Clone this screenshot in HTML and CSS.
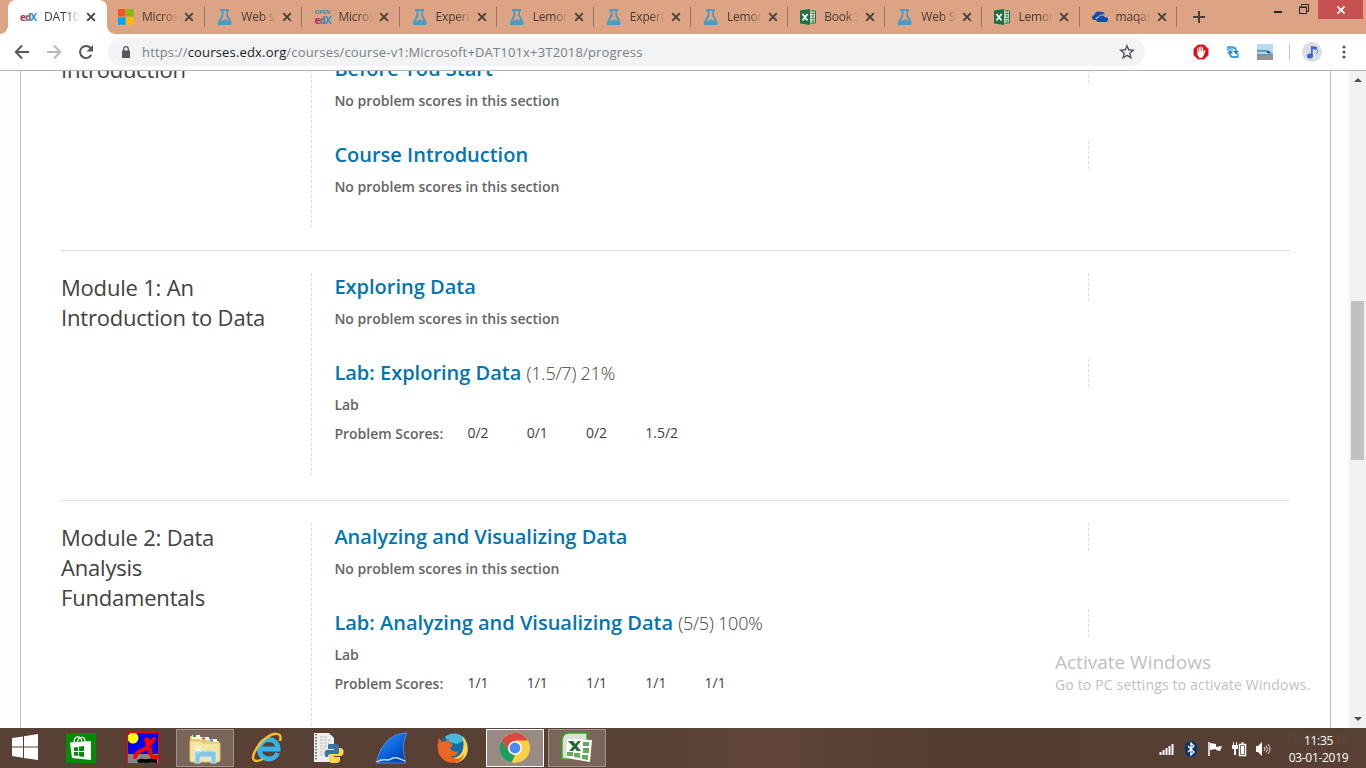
FILE: index.html
```
<!DOCTYPE html>
<html lang="en">
<head>
<meta charset="utf-8">
<title>Progress | DAT101x</title>
<link rel="stylesheet" href="styles.css">
</head>
<body>
<svg width="0" height="0" class="defs">
  <defs>
    <symbol id="x" viewBox="0 0 10 10"><path d="M1.2 1.2l7.6 7.6M8.800 1.200L1.200 8.800" stroke="#47413e" stroke-width="1.9" fill="none"/></symbol>
    <symbol id="flask" viewBox="0 0 16 16"><path fill="#4b9cc2" fill-rule="evenodd" d="M3 0h9v2h-1v4l3.500 7c.8 2-.2 3-1.500 3H2C.6 16 .2 14.500 1 13l3.500-7V2H3zM6.500 2v5L3.800 11.600l2 .2 1.500-1.500 3 1.200 1-.8L9.300 7V2z"/></symbol>
    <symbol id="xls" viewBox="0 0 16 16"><path fill="#1c7145" d="M0 1.500L10 0v16L0 14.500z"/><path d="M10.500 2H15.500v12h-5" fill="#fff" stroke="#1c7145"/><path d="M10.500 4.500h5M10.500 7h5M10.500 9.500h5M10.500 12h5M13 2v12" stroke="#1c7145" stroke-width=".8"/><path d="M2.500 5l5 6.500M7.500 5l-5 6.500" stroke="#fff" stroke-width="1.700"/></symbol>
  </defs>
</svg>
<header class="tabstrip">
  <div class="tab active">
    <span class="fav edx"><i>e</i><b>d</b><em>X</em></span><span class="label">DAT10</span><svg class="close"><use href="#x"/></svg>
  </div>
  <div class="tab second"><svg class="fav" viewBox="0 0 16 16"><path fill="#f35325" d="M0 0h7.500v7.500H0z"/><path fill="#81bc06" d="M8.200 0h7.500v7.500H8.200z"/><path fill="#05a6f0" d="M0 8.200h7.500v7.500H0z"/><path fill="#ffba08" d="M8.200 8.200h7.500v7.500H8.200z"/></svg><span class="label">Micros</span><svg class="close"><use href="#x"/></svg></div>
  <div class="tab"><svg class="fav"><use href="#flask"/></svg><span class="label">Web s</span><svg class="close"><use href="#x"/></svg></div>
  <div class="tab"><span class="fav openedx"><small>OPEN</small><span class="edx"><i>e</i><b>d</b><em>X</em></span></span><span class="label">Micros</span><svg class="close"><use href="#x"/></svg></div>
  <div class="tab"><svg class="fav"><use href="#flask"/></svg><span class="label">Experi</span><svg class="close"><use href="#x"/></svg></div>
  <div class="tab"><svg class="fav"><use href="#flask"/></svg><span class="label">Lemon</span><svg class="close"><use href="#x"/></svg></div>
  <div class="tab"><svg class="fav"><use href="#flask"/></svg><span class="label">Experi</span><svg class="close"><use href="#x"/></svg></div>
  <div class="tab"><svg class="fav"><use href="#flask"/></svg><span class="label">Lemon</span><svg class="close"><use href="#x"/></svg></div>
  <div class="tab"><svg class="fav"><use href="#xls"/></svg><span class="label">Book 3</span><svg class="close"><use href="#x"/></svg></div>
  <div class="tab"><svg class="fav"><use href="#flask"/></svg><span class="label">Web S</span><svg class="close"><use href="#x"/></svg></div>
  <div class="tab"><svg class="fav"><use href="#xls"/></svg><span class="label">Lemon</span><svg class="close"><use href="#x"/></svg></div>
  <div class="tab"><svg class="fav" viewBox="0 0 16 16"><path fill="#0b4db5" d="M2 11C-1 10-.5 6 2.500 6 3 3 5.500 1.500 8.500 3 11 2 12.500 4 12.500 5.500 9 4.500 7 6 6.500 7.500 4 7.500 3 9.500 4 11z"/><path fill="#0b4db5" d="M6 13c-2.500-.5-2-4 1-4.500C7.500 6 11.500 5.500 12.800 8.300c2.500-.3 3.700 1 3.200 2.700-.2 1.300-1 2-2 2z"/></svg><span class="label">maqas</span><svg class="close"><use href="#x"/></svg></div>
  <svg class="plus" viewBox="0 0 12 12"><path d="M6 0v12M0 6h12" stroke="#47413e" stroke-width="2"/></svg>
  <div class="window-buttons">
    <svg class="min" viewBox="0 0 8 2"><path fill="#222" d="M0 0h8v2H0z"/></svg>
    <svg class="max" viewBox="0 0 10 10"><path d="M2.500 2V.5h7v7H8M.5 3.500h7v6h-7zM0 3h8" fill="none" stroke="#222"/></svg>
    <span class="quit"><svg viewBox="0 0 8 8"><path d="M.5.5l7 7M7.500.5l-7 7" stroke="#fff" stroke-width="1.700"/></svg></span>
  </div>
</header>
<nav class="toolbar">
  <div class="nav">
    <svg viewBox="0 0 16 16"><path d="M15 8H2M8 1.500L1.800 8 8 14.500" fill="none" stroke="#55585c" stroke-width="2"/></svg>
    <svg viewBox="0 0 16 16"><path d="M1 8h13M8 1.500L14.200 8 8 14.500" fill="none" stroke="#b8babd" stroke-width="2"/></svg>
    <svg viewBox="0 0 16 16"><path d="M13.300 11A6 6 0 1 1 12.600 4" fill="none" stroke="#55585c" stroke-width="2"/><path d="M15 1v6.500H8.500z" fill="#55585c"/></svg>
  </div>
  <div class="omnibox">
    <svg class="lock" viewBox="0 0 8 12"><path d="M0 4.500h8V12H0z" fill="#55585c"/><path d="M1.700 5V3a2.300 2.300 0 0 1 4.600 0v2" fill="none" stroke="#55585c" stroke-width="1.300"/></svg>
    <span class="url">https://<b>courses.edx.org</b>/courses/course-v1:Microsoft+DAT101x+3T2018/progress</span>
    <svg class="star" viewBox="0 0 16 16"><path d="M8 1.800l1.700 4 4.600.4-3.500 3 1.100 4.500L8 11.400l-3.900 2.300 1.100-4.500-3.500-3 4.600-.4z" fill="none" stroke="#55585c" stroke-width="1.400"/></svg>
  </div>
  <div class="extensions">
    <svg viewBox="0 0 16 16"><path fill="#d8d8d8" d="M4.500 0h7L16 4.500v7L11.500 16h-7L0 11.500v-7z"/><path fill="#e10e0e" d="M5 .7h6L15.300 5v6L11 15.300H5L.7 11V5z"/><path fill="#fff" d="M4 8V4.500h1V8h.6V3h1.200v4h.5V2.500h1.200V7H9V3.300h1.200V8l1.300-2 1 .5L11 11l-2 3H6.500L4.500 11z"/></svg>
    <svg viewBox="0 0 16 16"><path d="M2 2h6v6H5V5L2 5z" fill="#8bd0f2"/><path d="M3 3.500h5q3 0 3 4M13 13H8q-3 0-3-4" fill="none" stroke="#3d9fd6" stroke-width="2"/><path d="M8 7h6l-3 3.500zM2 9.500h6L5 6z" fill="#2b83ba"/><path d="M2 2v5l3-1zM14 14V9l-3 1z" fill="#55b5ea"/></svg>
    <svg viewBox="0 0 16 16"><path fill="#b7dcf1" d="M0 0h16v16H0z"/><path fill="#7fb6d3" d="M0 5.500l11 .5 4 3v2H0z"/><path fill="#9a9290" d="M0 11.500h16V16H0z"/><path d="M0 7h10" stroke="#3d86ae"/><path d="M1 9h9" stroke="#eaf5fb"/><path d="M0 11h16" stroke="#4b7d99"/><path fill="#295874" d="M10 7h2l2 2h-4z"/></svg>
    <i class="rule"></i>
    <span class="avatar"><svg viewBox="0 0 16 16"><path d="M7 12V2l6 1v3L8.700 5v7" fill="#3c62da"/><ellipse cx="6" cy="12" rx="3" ry="2.500" fill="#3c62da"/><path d="M12 4l2 4-2 2" stroke="#6685df" fill="none"/></svg></span>
    <svg class="dots" viewBox="0 0 4 14"><g fill="#55585c"><circle cx="2" cy="2" r="1.600"/><circle cx="2" cy="7" r="1.600"/><circle cx="2" cy="12" r="1.600"/></g></svg>
  </div>
</nav>
<main class="viewport">
  <div class="page">
    <section class="chapter first">
      <h2>Introduction</h2>
      <div class="sections">
        <div class="section"><h3><a>Before You Start</a></h3><p>No problem scores in this section</p></div>
        <div class="section"><h3><a>Course Introduction</a></h3><p>No problem scores in this section</p></div>
      </div>
    </section>
    <section class="chapter">
      <h2>Module 1: An Introduction to Data</h2>
      <div class="sections">
        <div class="section"><h3><a>Exploring Data</a></h3><p>No problem scores in this section</p></div>
        <div class="section graded"><h3><a>Lab: Exploring Data</a> <span class="total">(1.5/7) 21%</span></h3><p>Lab</p>
          <dl><dt>Problem Scores:</dt><dd>0/2</dd><dd>0/1</dd><dd>0/2</dd><dd>1.5/2</dd></dl></div>
      </div>
    </section>
    <section class="chapter">
      <h2>Module 2: Data Analysis Fundamentals</h2>
      <div class="sections">
        <div class="section"><h3><a>Analyzing and Visualizing Data</a></h3><p>No problem scores in this section</p></div>
        <div class="section graded"><h3><a>Lab: Analyzing and Visualizing Data</a> <span class="total">(5/5) 100%</span></h3><p>Lab</p>
          <dl><dt>Problem Scores:</dt><dd>1/1</dd><dd>1/1</dd><dd>1/1</dd><dd>1/1</dd><dd>1/1</dd></dl></div>
      </div>
    </section>
  </div>
  <div class="scrollbar">
    <svg viewBox="0 0 8 4"><path d="M0 4l4-4 4 4z" fill="#505050"/></svg>
    <i class="thumb"></i>
    <svg viewBox="0 0 8 4"><path d="M0 0l4 4 4-4z" fill="#505050"/></svg>
  </div>
  <aside class="watermark"><strong>Activate Windows</strong><span>Go to PC settings to activate Windows.</span></aside>
</main>
<footer class="taskbar">
  <div class="start"><svg width="26" height="26" viewBox="0 0 26 26"><path fill="#fff" d="M0 4l11-1.600V12.500H0zM12 2.200L26 0v12.500H12zM0 13.500h11v10.200L0 22zM12 13.500h14V26l-14-2.100z"/></svg></div>
  <div class="slot"><svg viewBox="0 0 30 30"><path fill="#048a04" d="M0 0h30v30H0z"/><path fill="#fff" d="M4 9.500l21-1.500v19L6 25z"/><path d="M8 10c0-8 7-8 8-1M11 10c2-8 8-7 8-1" fill="none" stroke="#fff" stroke-width="1.200"/><path fill="#048a04" d="M8 14.500l4-.5v4H8zM13 13.800l5-.8v5h-5zM8 19h4v4l-4-.4zM13 19h5v5l-5-.8z"/></svg></div>
  <div class="slot"><svg class="large" viewBox="0 0 32 32"><path fill="#0000f2" d="M0 0h32v22H0z"/><path fill="#858585" d="M0 22h32v10H0z"/><circle cx="6" cy="6" r="5.500" fill="#ff0"/><path d="M11 30c4-3 6 0 10-1s6 0 9 0" stroke="#000" stroke-width="4" fill="none"/><path d="M8 25q2-6 8-7q5-3 7-6l4-5M20 8q0 5 3 9q0 6 3 8h4" stroke="#f00" stroke-width="4" fill="none" stroke-linecap="round"/><circle cx="20" cy="8" r="2.700" fill="#f00"/><path d="M.5.5h31v31H.5z" stroke="#f00" fill="none"/></svg></div>
  <div class="slot"><span class="window"><svg class="large" viewBox="0 0 32 32"><path fill="#e5cd79" d="M1 4h10l2 3h6l1 2h10v21H1z"/><path fill="#fff9df" d="M3 3h8v4H3zM11 5h9v3h-9zM20 7h8v3h-8z"/><path d="M4 4h3" stroke="#14a522" stroke-width="2"/><path d="M13 6.500h3" stroke="#d5472b" stroke-width="2"/><path d="M21 8.500h3" stroke="#2389d2" stroke-width="2"/><path d="M1 9h11l2 2h17v17c0 1-1 2-2 2H3c-1 0-2-1-2-2z" fill="#f5e5a2" stroke="#dfc46c"/><path d="M6 31V21c0-2 1-2 2-2h17c2 0 2 1 2 2v10h-5v-6H11v6z" fill="#83c6e5" stroke="#c5eafa"/><path d="M9 13v9M5 17h8M6 14l6 6M12 14l-6 6" stroke="#fff" stroke-width=".7"/></svg></span></div>
  <div class="slot"><svg viewBox="0 0 30 30"><path d="M25.500 20c-3 9-18 8-18-4s18-13 18.500 0H9" fill="none" stroke="#36b3e9" stroke-width="5"/><path d="M5 28C-4 28 4 13 14 5c7-5 17-7 14 3M5 28c2 0 4-1 6-2" fill="none" stroke="#f4bf26" stroke-width="2.500"/></svg></div>
  <div class="slot"><svg viewBox="0 0 30 30"><path fill="#eee" d="M0 0h15l5 5v24H0z"/><path d="M2 1v27" stroke="#555" stroke-width="1.500" stroke-dasharray="1.500 1.500"/><path d="M6 4h8M6 7h11M6 10h9M6 13h11M6 16h6M6 19h5M6 22h4" stroke="#bbb" stroke-dasharray="3 1"/><path fill="#3675a9" d="M15 11h6c3 0 4 1 4 3v4c0 2-1 3-3 3h-5c-2 0-3 1-3 3h-2c-2-1-2-7 1-7h7v-1h-6v-2c0-2 0-3 1-3z"/><path fill="#ffd54b" d="M25 15h2c4 1 3 8 0 8h-7v1h6v3c0 2-1 3-4 3h-4c-2 0-3-1-3-3v-4c0-1 1-2 3-2h5c2 0 2-1 2-3z"/></svg></div>
  <div class="slot"><svg viewBox="0 0 30 30"><defs><linearGradient id="fin" x2=".8" y2="1"><stop stop-color="#4090f5"/><stop offset=".6" stop-color="#0962dc"/><stop offset="1" stop-color="#003eaf"/></linearGradient></defs><path fill="url(#fin)" stroke="#5d9ce8" stroke-width=".7" d="M0 30C4 14 13 0 31 0c-5 10-4 20-1 30z"/><path d="M1 29c7-5 9 0 14-3s9 0 14 2" stroke="#c5dcfa" stroke-width="1.500" fill="none"/></svg></div>
  <div class="slot"><svg viewBox="0 0 30 30"><circle cx="16" cy="14.500" r="14" fill="#176aa9"/><path fill="#46b9dc" d="M7 4C12-1 23-1 27 7l-8 4-8-2z"/><path fill="#fbd64b" d="M24 3c9 8 8 24-6 27l-3-5c9-1 13-10 9-22z"/><path fill="#e96724" d="M1 5l3 4 4-1 3-3v5c4 0 5 2 1 5 2 4 5 4 8 3-1 5-5 6-8 5 6 5 13 2 14-3 0 9-12 13-20 7S-1 13 1 5z"/></svg></div>
  <div class="slot"><span class="window current"><svg viewBox="0 0 30 30"><circle cx="15" cy="15" r="15" fill="#fbce46"/><path fill="#dc493e" d="M2 7.500C8-2 22-3 28 7.500H15L8.500 19z"/><path fill="#1a9f5c" d="M2 7.500L9 19l6 3-3.500 7.600C1 27-3 16 2 7.500z"/><circle cx="15" cy="15" r="7" fill="#fff"/><circle cx="15" cy="15" r="5.400" fill="#4a89f3"/></svg></span></div>
  <div class="slot"><span class="window"><svg viewBox="0 0 30 30"><path fill="#d8e2d5" stroke="#30ac21" stroke-width="1.500" d="M0 26V8c0-5 3-8 7-8h18v8H7v18z"/><path fill="#fff" d="M5 6l25 1-2 22-24-4z"/><path fill="#65a95b" d="M21 9h6v4h-6zM21 15h6v5h-6zM20 22h6v5l-6-1zM12 20h6v5l-6-1zM5 19h6v4H5z"/><path d="M6 8h5l8 10h-4zM16 8h3l-8 10H7z" fill="#246c30"/></svg></span></div>
  <div class="tray">
    <svg viewBox="0 0 16 16"><path d="M1.500 11v3M4.500 9v5M7.500 7v7M10.500 5v9M13.500 3v11" stroke="#fff" stroke-width="2"/></svg>
    <svg viewBox="0 0 16 16"><rect x="2" width="12" height="16" rx="6" fill="#07366f"/><path d="M5 5l6 6-3 3V2l3 3-6 6" fill="none" stroke="#fff" stroke-width="1.300"/></svg>
    <svg viewBox="0 0 16 16"><path d="M2 1v14" stroke="#fff" stroke-width="1.500"/><path d="M3 2l6 1v3l6-1-2 5-4-1V8L3 9z" fill="#fff"/></svg>
    <svg viewBox="0 0 16 16"><path d="M8.500 3.500h6v11h-6zM10.500 2h2" fill="none" stroke="#fff" stroke-width="1.500"/><path d="M10 5h3v8h-3z" fill="#fff"/><path d="M1 4h6v4H5v6H3V8H1zM2 1h1v3H2zM5 1h1v3H5z" fill="#fff"/></svg>
    <svg viewBox="0 0 16 16"><path d="M1 5h2l4-4v14l-4-4H1z" fill="#fff"/><path d="M9 6q2 2 0 4M11 4.500q3 3.500 0 7M13 3q4 5 0 10" fill="none" stroke="#ddd"/></svg>
  </div>
  <div class="clock"><span>11:35</span><span>03-01-2019</span></div>
</footer>
</body>
</html>
```
FILE: styles.css
```
* { box-sizing: border-box; }
body { margin: 0; width: 1366px; height: 768px; overflow: hidden; display: flex; flex-direction: column; background: #fff; font-family: "Open Sans", "Noto Sans", sans-serif; }
.defs { position: absolute; }
svg { display: block; flex: none; }
h2, h3, p, dl, dd { margin: 0; }

/* Tab strip */
.tabstrip { display: flex; height: 34px; flex: none; background: #dca384; padding-left: 8px; }
.tab { width: 97.15px; flex: none; display: flex; align-items: center; padding: 0 0 0 12px; position: relative; }
.tab::after { content: ""; position: absolute; right: 0; top: 7px; width: 1px; height: 20px; background: #967469; }
.second { width: 98.300px; padding-left: 11px; }
.second .label { width: 36px; }
.active { width: 99px; background: #fff; border-radius: 8px 8px 0 0; padding-left: 12px; }
.active::after { display: none; }
.active::before { content: ""; position: absolute; left: -8px; bottom: 0; width: 115px; height: 8px; background: radial-gradient(circle at 0 0, transparent 7.500px, #fff 8px) left / 8px 8px no-repeat, radial-gradient(circle at 100% 0, transparent 7.500px, #fff 8px) right / 8px 8px no-repeat; }
.fav { width: 16px; height: 16px; flex: none; }
.label { width: 35px; margin-left: 8px; font-size: 12px; line-height: 20px; letter-spacing: -.2px; color: #493c36; overflow: hidden; white-space: nowrap; mask-image: linear-gradient(90deg, #000 60%, transparent 100%); }
.active .label { margin-left: 8px; width: 36px; }
.close { width: 10px; height: 10px; margin-left: 6px; }
.edx { display: flex; align-items: center; font: bold 10px/16px "Open Sans", sans-serif; letter-spacing: -1px; }
.edx i { color: #b52a67; font-style: normal; }
.edx b { color: #777; }
.edx em { color: #1695e0; font-style: normal; }
.openedx { display: flex; flex-direction: column; }
.openedx small { font: bold 6px/6px "Open Sans", sans-serif; color: #3d8fac; letter-spacing: -.3px; }
.openedx .edx { line-height: 10px; }
.plus { width: 12px; height: 12px; margin: 11px 0 0 16px; }
.window-buttons { display: flex; margin-left: auto; padding-right: 3px; align-items: flex-start; }
.min { width: 8px; height: 2px; margin-top: 11px; }
.max { width: 10px; height: 10px; margin: 4px 9px 0 17px; }
.quit { width: 45px; height: 19px; background: #c75050; display: grid; place-items: center; }
.quit svg { width: 8px; height: 8px; }

/* Address bar */
.toolbar { display: flex; align-items: center; height: 37px; flex: none; border-bottom: 1px solid #b3b3b3; padding-left: 14px; }
.nav { display: flex; gap: 16px; width: 94px; }
.nav svg { width: 16px; height: 16px; }
.omnibox { width: 1037px; height: 28px; border-radius: 14px; background: #f1f3f4; display: flex; align-items: center; padding: 0 10px 0 14px; }
.lock { width: 8px; height: 12px; }
.url { margin-left: 12px; font-size: 13px; letter-spacing: .17px; color: #7b7f84; white-space: nowrap; }
.url b { font-weight: 400; color: #202124; }
.star { width: 16px; height: 16px; margin-left: auto; }
.extensions { display: flex; align-items: center; padding-left: 48px; gap: 16px; }
.extensions > svg { width: 16px; height: 16px; }
.rule { width: 1px; height: 16px; background: #c6c8ca; }
.avatar { width: 20px; height: 20px; margin-left: -6px; border-radius: 50%; background: #dcdddf; display: grid; place-items: center; outline: 0; }
.avatar svg { width: 16px; height: 16px; }
.rule + .avatar { margin-left: -4px; }
.extensions .dots { width: 4px; height: 14px; margin-left: 4px; }

/* Course progress */
.viewport { display: flex; height: 657px; flex: none; overflow: hidden; background: #fdfdfd; position: relative; }
.page { width: 1311px; height: 657px; margin-left: 20px; overflow: hidden; border: solid #c2c2c2; border-width: 0 1px; padding: 0 40px; background: #fff; }
.chapter { display: flex; border-top: 1px solid #ddd; padding: 22px 0; }
.first { margin-top: -39px; }
.chapter h2 { width: 250px; margin-top: -1px; padding-right: 40px; font-size: 22px; line-height: 30px; letter-spacing: -.2px; font-weight: 400; color: #414141; }
.sections { flex: 1; padding-left: 23.400px; background: repeating-linear-gradient(#ddd 0 3px, transparent 3px 5px) left / 1px 100% no-repeat; }
.section { height: 86px; }
.first .section:last-child { height: 87px; }
.section.graded { height: 119px; }
.section h3 { height: 28px; width: 754.600px; line-height: 28px; font-size: 20px; font-weight: 600; color: #0075b4; background: repeating-linear-gradient(#ddd 0 3px, transparent 3px 5px) right / 1px 100% no-repeat; }
.section .total { font-size: 18px; letter-spacing: -.22px; font-weight: 300; color: #414141; }
.section p, .section dl { margin-top: 7px; font-size: 14px; line-height: 22px; font-weight: 600; color: #646464; }
.section dl { display: flex; }
.section dt { width: 133px; }
.section dd { width: 59.300px; font-weight: 400; color: #414141; margin-top: -1px; }
.scrollbar { margin-left: auto; width: 17px; background: #f1f1f1; display: flex; flex-direction: column; align-items: center; padding: 7px 0 7px; }
.scrollbar svg { width: 8px; height: 4px; }
.thumb { width: 13px; height: 159px; margin: 219px 0 auto; background: #c1c1c1; }
.watermark { position: absolute; left: 1055px; top: 577px; display: flex; flex-direction: column; color: #bfbfbf; white-space: nowrap; }
.watermark strong { font-weight: 400; font-size: 19px; line-height: 28px; }
.watermark span { font-size: 14px; line-height: 18px; letter-spacing: .16px; }

/* Taskbar */
.taskbar { display: flex; height: 40px; flex: none; background: linear-gradient(90deg, #584034 0 45%, #604538 56%, #553c30 70%, #584034); color: #fff; }
.start { width: 50px; padding: 6px 0 0 12px; }
.slot { width: 62px; display: grid; place-items: center; }
.slot svg { width: 30px; height: 30px; overflow: visible; }
.slot .large { width: 32px; height: 32px; }
.window { width: 58px; height: 38px; display: grid; place-items: center; background: #7a655b; border: 1px solid #a3938b; }
.current { background: #998b83; border-color: #fff; }
.tray { display: flex; align-items: center; gap: 8px; margin-left: auto; padding-top: 2px; }
.tray svg { width: 16px; height: 16px; }
.clock { width: 95px; display: flex; flex-direction: column; align-items: center; padding: 4px 0 0; font-size: 12px; line-height: 17px; letter-spacing: -.3px; }
.clock span:first-child { text-shadow: -18px -2px 3px #84706655, 14px -2px 3px #84706655; }
```
